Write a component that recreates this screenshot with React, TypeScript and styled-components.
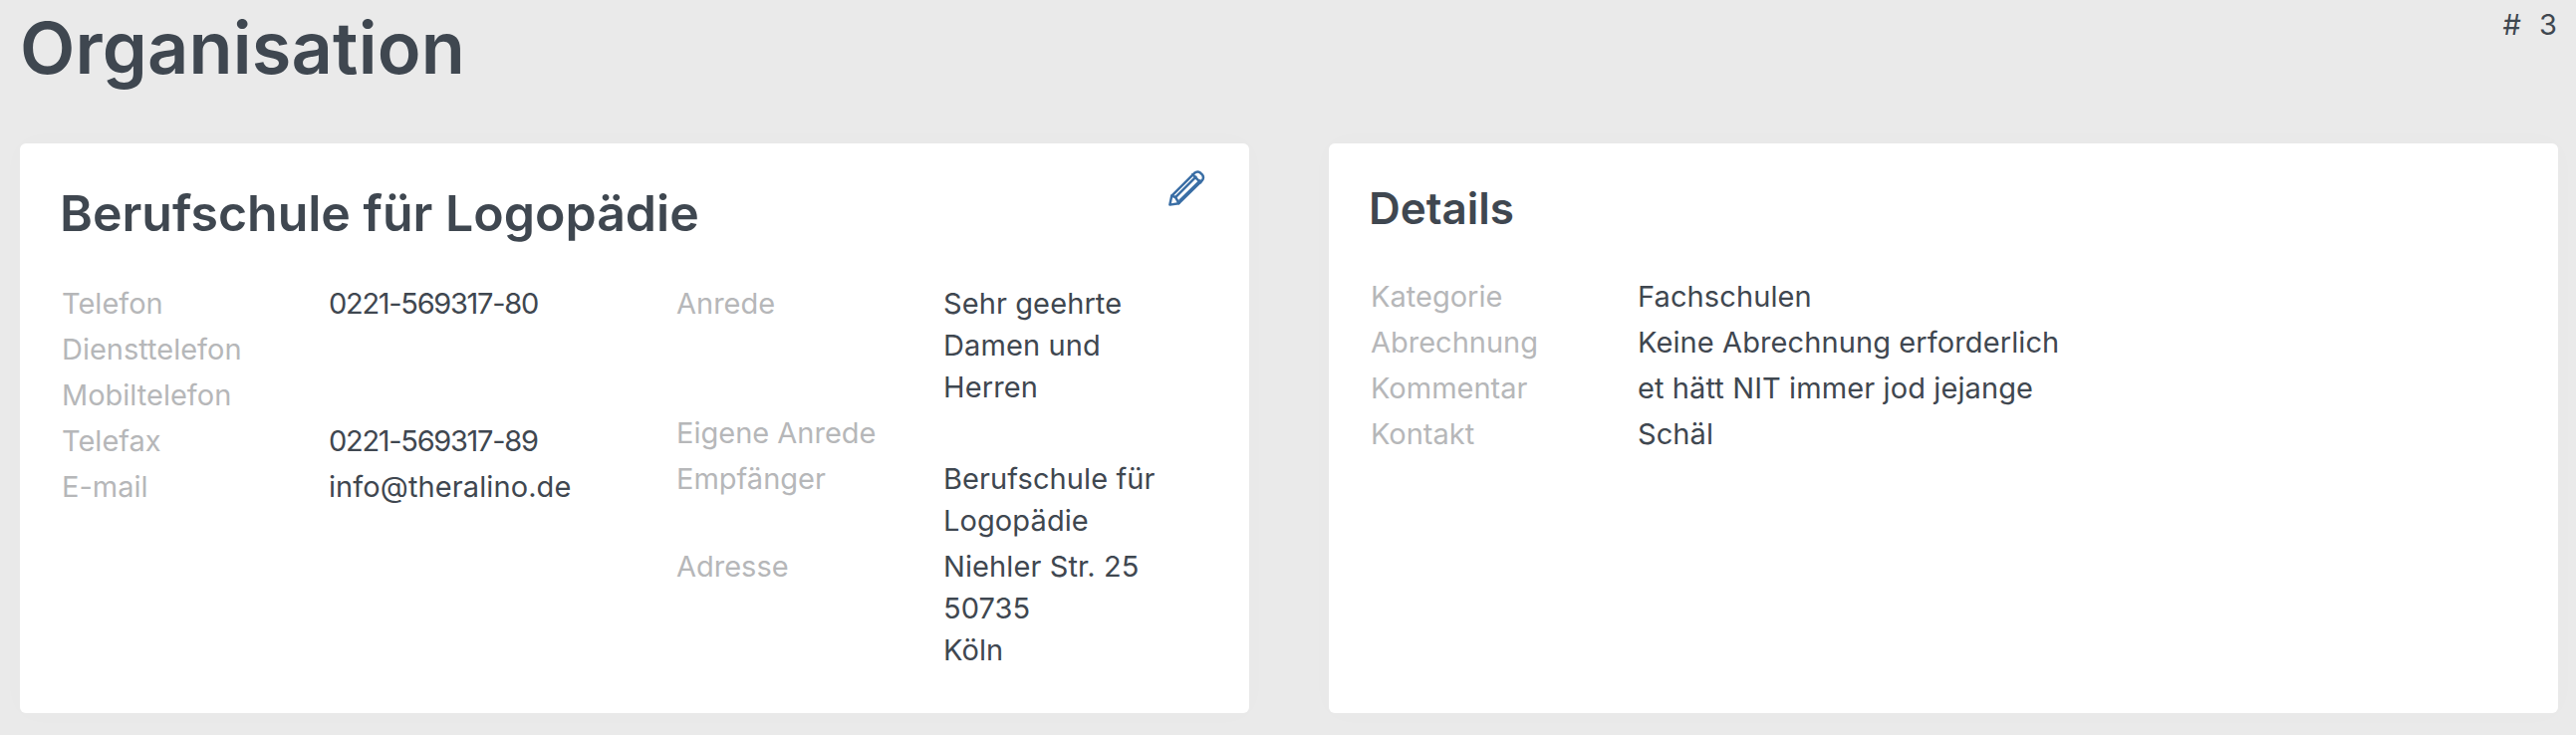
import React from "react";
import styled, { createGlobalStyle } from "styled-components";

const Global = createGlobalStyle`
  html, body { margin: 0; padding: 0; background: #eaeaea; }
  body { font-family: Inter, "Liberation Sans", sans-serif; color: #3f4750; }
`;

const Page = styled.div`
  position: relative;
  box-sizing: border-box;
  width: 2586px;
  height: 738px;
  padding: 0 18px 0 20px;
  overflow: hidden;
  background: #eaeaea;
`;

const Heading = styled.h1`
  margin: 0;
  height: 144px;
  padding-top: 6px;
  box-sizing: border-box;
  font-size: 72px;
  line-height: 84px;
  font-weight: 600;
  letter-spacing: 0.2px;
  color: #3f4750;
`;

const IdBadge = styled.div`
  position: absolute;
  top: 7px;
  right: 14px;
  font-size: 29px;
  line-height: 36px;
  letter-spacing: 5px;
  color: #3f4750;
`;

const Columns = styled.div`
  display: grid;
  grid-template-columns: 1234px 1234px;
  column-gap: 80px;
`;

const Card = styled.section`
  position: relative;
  box-sizing: border-box;
  height: 572px;
  padding: 40px 40px 0 42px;
  background: #fff;
  border-radius: 6px;
  box-shadow: 0 0 30px rgba(0, 0, 0, 0.015);
`;

const CardTitle = styled.h2<{ $large?: boolean }>`
  margin: ${(p) => (p.$large ? "-1px 0 39px -2px" : "-2px 0 41px -2px")};
  font-size: ${(p) => (p.$large ? "50px" : "44px")};
  line-height: ${(p) => (p.$large ? "62px" : "54px")};
  font-weight: 600;
  color: #3f4750;
`;

const EditButton = styled.button`
  position: absolute;
  top: 26px;
  right: 44px;
  padding: 0;
  border: 0;
  background: none;
  display: flex;
  color: #3a6ea5;
`;

const InfoGrid = styled.div`
  display: grid;
  grid-template-columns: 617px 520px;
`;

const InfoList = styled.dl`
  margin: 0;
  display: flex;
  flex-direction: column;
  gap: 4px;
`;

const Row = styled.div`
  display: grid;
  grid-template-columns: 268px 1fr;
`;

const Label = styled.dt`
  font-size: 29px;
  line-height: 42px;
  color: #b6b7b9;
`;

const Value = styled.dd<{ $digits?: boolean }>`
  margin: 0;
  min-height: 42px;
  font-size: 29px;
  line-height: 42px;
  letter-spacing: ${(p) => (p.$digits ? "-1.3px" : "0.1px")};
  color: #3f4750;
`;

const Pencil = () => (
  <svg width="38" height="38" viewBox="0 0 40 40" fill="none" stroke="currentColor" strokeWidth="2.6" strokeLinejoin="round" strokeLinecap="round">
    <path d="M2.5 37.5 L4.5 28 L28.5 4 Q31.5 1.5 34.5 3.5 L37 6 Q39 9 36.5 12 L12 36 Z" />
    <path d="M4.5 28 L8.5 29.5 L10.5 33 L12 36" />
    <path d="M8.5 29.5 L30 8 M13 33 L34.5 12 M26.5 5.5 L35 14" />
  </svg>
);

const contact: [string, string, boolean?][] = [
  ["Telefon", "0221-569317-80", true],
  ["Diensttelefon", ""],
  ["Mobiltelefon", ""],
  ["Telefax", "0221-569317-89", true],
  ["E-mail", "info@theralino.de"],
];
const address: [string, string[]][] = [
  ["Anrede", ["Sehr geehrte Damen und Herren"]],
  ["Eigene Anrede", []],
  ["Empfänger", ["Berufschule für Logopädie"]],
  ["Adresse", ["Niehler Str. 25", "50735", "Köln"]],
];
const details = [
  ["Kategorie", "Fachschulen"],
  ["Abrechnung", "Keine Abrechnung erforderlich"],
  ["Kommentar", "et hätt NIT immer jod jejange"],
  ["Kontakt", "Schäl"],
];

export default function App() {
  return (
    <Page>
      <Global />
      <Heading>Organisation</Heading>
      <IdBadge># 3</IdBadge>
      <Columns>
        <Card>
          <CardTitle $large>Berufschule für Logopädie</CardTitle>
          <EditButton aria-label="Bearbeiten"><Pencil /></EditButton>
          <InfoGrid>
            <InfoList>
              {contact.map(([l, v, d]) => (
                <Row key={l}><Label>{l}</Label><Value $digits={d}>{v}</Value></Row>
              ))}
            </InfoList>
            <InfoList>
              {address.map(([l, lines]) => (
                <Row key={l}>
                  <Label>{l}</Label>
                  <Value>{lines.map((t) => <div key={t}>{t}</div>)}</Value>
                </Row>
              ))}
            </InfoList>
          </InfoGrid>
        </Card>
        <Card>
          <CardTitle>Details</CardTitle>
          <InfoList>
            {details.map(([l, v]) => (
              <Row key={l}><Label>{l}</Label><Value>{v}</Value></Row>
            ))}
          </InfoList>
        </Card>
      </Columns>
    </Page>
  );
}
